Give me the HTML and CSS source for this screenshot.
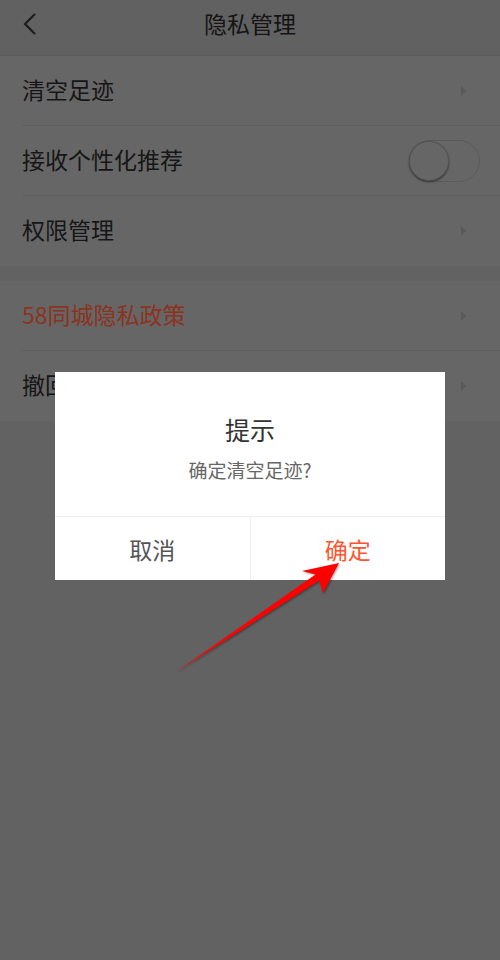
FILE: index.html
```html
<!DOCTYPE html>
<html lang="zh-CN">
<head>
    <meta charset="UTF-8">
    <meta name="viewport" content="width=device-width, initial-scale=1.0">
    <title>隐私管理</title>
    <link rel="stylesheet" href="styles.css">
</head>
<body>
    <div class="page">
        <header class="topbar">
            <span class="back">
                <svg width="14" height="22" viewBox="0 0 14 22"><path d="M12 1 L2 11 L12 21" fill="none" stroke="#1c1c1c" stroke-width="2.2"/></svg>
            </span>
            <h1>隐私管理</h1>
        </header>

        <div class="group">
            <div class="row">
                <span class="label">清空足迹</span>
                <span class="arrow"></span>
            </div>
            <div class="row">
                <span class="label">接收个性化推荐</span>
                <span class="switch"><span class="knob"></span></span>
            </div>
            <div class="row">
                <span class="label">权限管理</span>
                <span class="arrow"></span>
            </div>
        </div>

        <div class="group">
            <div class="row">
                <span class="label red">58同城隐私政策</span>
                <span class="arrow"></span>
            </div>
            <div class="row">
                <span class="label">撤回隐私政策授权</span>
                <span class="arrow"></span>
            </div>
        </div>

        <!-- 弹窗 -->
        <div class="dialog">
            <div class="dialog-body">
                <div class="dialog-title">提示</div>
                <div class="dialog-msg">确定清空足迹?</div>
            </div>
            <div class="dialog-btns">
                <div class="btn">取消</div>
                <div class="btn ok">确定</div>
            </div>
        </div>

        <svg class="pointer" width="500" height="960" viewBox="0 0 500 960">
            <polygon points="176,672 315.5,574.6 302,571 339,563 323,593 319.3,580.4" fill="#ff0000"/>
        </svg>
    </div>
</body>
</html>
```

FILE: styles.css
```css
body {
    margin: 0;
    background-color: #626262;
    font-family: 'Noto Sans CJK SC', 'Noto Sans', sans-serif;
    color: #161616;
}

.page {
    position: relative;
    width: 500px;
    height: 960px;
    overflow: hidden;
}

.topbar {
    height: 56px;
    padding-bottom: 10px;
    background-color: #616161;
    border-bottom: 1px solid #5b5b5b;
    box-sizing: border-box;
    display: flex;
    align-items: center;
    justify-content: center;
    position: relative;
}

.topbar h1 {
    margin: 0;
    font-size: 23px;
    font-weight: normal;
    color: #141414;
}

.back {
    position: absolute;
    left: 23px;
    top: 13px;
    display: flex;
}

.group {
    background-color: #666666;
}

.group + .group {
    margin-top: 15px;
}

.row {
    height: 70px;
    margin-left: 22px;
    padding-right: 21px;
    display: flex;
    align-items: center;
    justify-content: space-between;
    border-bottom: 1px solid #5f5f5f;
    box-sizing: border-box;
}

.row:last-child {
    border-bottom: none;
}

.label {
    font-size: 23px;
    margin-bottom: 4px;
}

.label.red {
    color: #8b3320;
}

.arrow {
    width: 0;
    height: 0;
    border-top: 5px solid transparent;
    border-bottom: 5px solid transparent;
    border-left: 5px solid #595959;
    margin-right: 13px;
}

.switch {
    width: 71px;
    height: 42px;
    border: 1px solid #5a5a5a;
    border-radius: 21px;
    box-sizing: border-box;
    position: relative;
    margin-right: -1px;
}

.knob {
    position: absolute;
    left: -1px;
    top: 0;
    width: 40px;
    height: 40px;
    border-radius: 50%;
    background-color: #666;
    box-shadow: 0 1px 2px rgba(0, 0, 0, 0.5);
    border: 1px solid #555;
    box-sizing: border-box;
}

.dialog {
    position: absolute;
    left: 55px;
    top: 372px;
    width: 390px;
    height: 208px;
    background-color: #ffffff;
    display: flex;
    flex-direction: column;
}

.dialog-body {
    flex: 1;
    text-align: center;
    padding-top: 41px;
    box-sizing: border-box;
}

.dialog-title {
    font-size: 25px;
    line-height: 32px;
    color: #333;
}

.dialog-msg {
    margin-top: 12px;
    font-size: 19px;
    line-height: 26px;
    color: #666;
}

.dialog-btns {
    height: 63px;
    display: flex;
    border-top: 1px solid #eeeeee;
}

.btn {
    flex: 1;
    display: flex;
    align-items: center;
    justify-content: center;
    font-size: 23px;
    color: #555;
}

.btn.ok {
    color: #ff552e;
    border-left: 1px solid #eeeeee;
}

.pointer {
    position: absolute;
    left: 0;
    top: 0;
    filter: drop-shadow(1px 1px 1px rgba(0, 0, 0, 0.4));
}
```
